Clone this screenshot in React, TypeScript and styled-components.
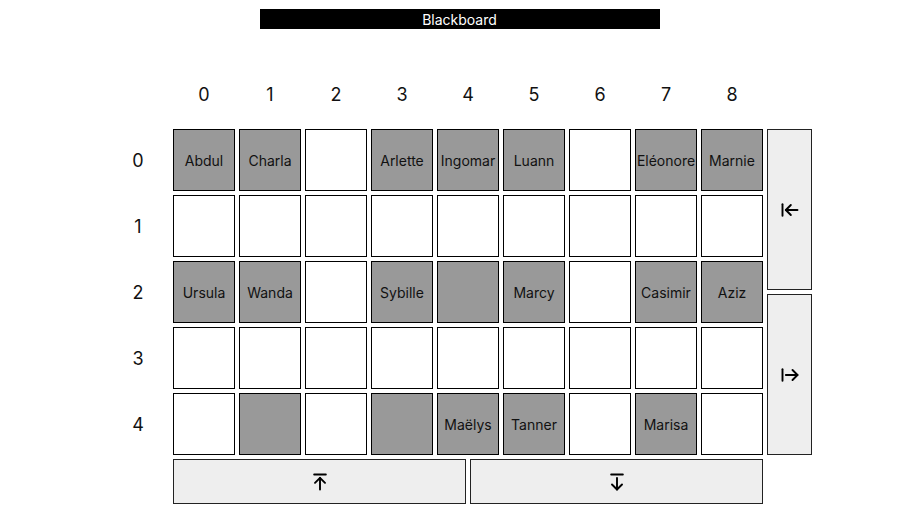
import React from "react";
import styled, { createGlobalStyle } from "styled-components";
import {
  ArrowLeftToLine,
  ArrowRightFromLine,
  ArrowUpToLine,
  ArrowDownFromLine,
} from "lucide-react";

const GlobalStyle = createGlobalStyle`
  html, body {
    margin: 0;
    padding: 0;
    background: #fff;
    font-family: Inter, "Noto Sans", sans-serif;
    color: #111;
  }
`;

type Seat = { name?: string; taken: boolean };

const t = (name?: string): Seat => ({ name, taken: true });
const e: Seat = { taken: false };

const seats: Seat[][] = [
  [t("Abdul"), t("Charla"), e, t("Arlette"), t("Ingomar"), t("Luann"), e, t("Eléonore"), t("Marnie")],
  [e, e, e, e, e, e, e, e, e],
  [t("Ursula"), t("Wanda"), e, t("Sybille"), t(), t("Marcy"), e, t("Casimir"), t("Aziz")],
  [e, e, e, e, e, e, e, e, e],
  [e, t(), e, t(), t("Maëlys"), t("Tanner"), e, t("Marisa"), e],
];

const Page = styled.div`
  display: flex;
  flex-direction: column;
  align-items: center;
  padding-top: 9px;
`;

const Title = styled.div`
  width: 400px;
  height: 20px;
  box-sizing: border-box;
  padding-top: 1px;
  background: #000;
  color: #fff;
  font-size: 14px;
  line-height: 19px;
  text-align: center;
`;

const Board = styled.div`
  margin-top: 34px;
  display: grid;
  grid-template-columns: repeat(10, 62px) 45px;
  grid-template-rows: repeat(6, 62px) 45px;
  gap: 4px;
`;

const Label = styled.div`
  display: flex;
  align-items: center;
  justify-content: center;
  font-size: 18px;
`;

const Cell = styled.div<{ $taken: boolean }>`
  box-sizing: border-box;
  border: 1px solid #000;
  background: ${(p) => (p.$taken ? "#999" : "#fff")};
  display: flex;
  align-items: center;
  justify-content: center;
  font-size: 14px;
  white-space: nowrap;
  overflow: hidden;
`;

const SideControls = styled.div`
  grid-column: 11;
  grid-row: 2 / 7;
  display: flex;
  flex-direction: column;
  gap: 4px;
`;

const BottomControls = styled.div`
  grid-column: 2 / 11;
  grid-row: 7;
  display: grid;
  grid-template-columns: 1fr 1fr;
  gap: 4px;
`;

const ShiftButton = styled.button`
  flex: 1;
  box-sizing: border-box;
  border: 1px solid #222;
  background: #eee;
  display: flex;
  align-items: center;
  justify-content: center;
  padding: 0;
  color: #000;
  cursor: pointer;
`;

const iconProps = { size: 20, strokeWidth: 2.3 };

export default function App() {
  return (
    <>
      <GlobalStyle />
      <Page>
        <Title>Blackboard</Title>
        <Board>
          <div />
          {seats[0].map((_, c) => (
            <Label key={`c${c}`}>{c}</Label>
          ))}
          <div />
          {seats.map((row, r) => (
            <React.Fragment key={r}>
              <Label>{r}</Label>
              {row.map((s, c) => (
                <Cell key={c} $taken={s.taken}>
                  {s.name}
                </Cell>
              ))}
            </React.Fragment>
          ))}
          <SideControls>
            <ShiftButton>
              <ArrowLeftToLine {...iconProps} />
            </ShiftButton>
            <ShiftButton>
              <ArrowRightFromLine {...iconProps} />
            </ShiftButton>
          </SideControls>
          <BottomControls>
            <ShiftButton>
              <ArrowUpToLine {...iconProps} />
            </ShiftButton>
            <ShiftButton>
              <ArrowDownFromLine {...iconProps} />
            </ShiftButton>
          </BottomControls>
        </Board>
      </Page>
    </>
  );
}
